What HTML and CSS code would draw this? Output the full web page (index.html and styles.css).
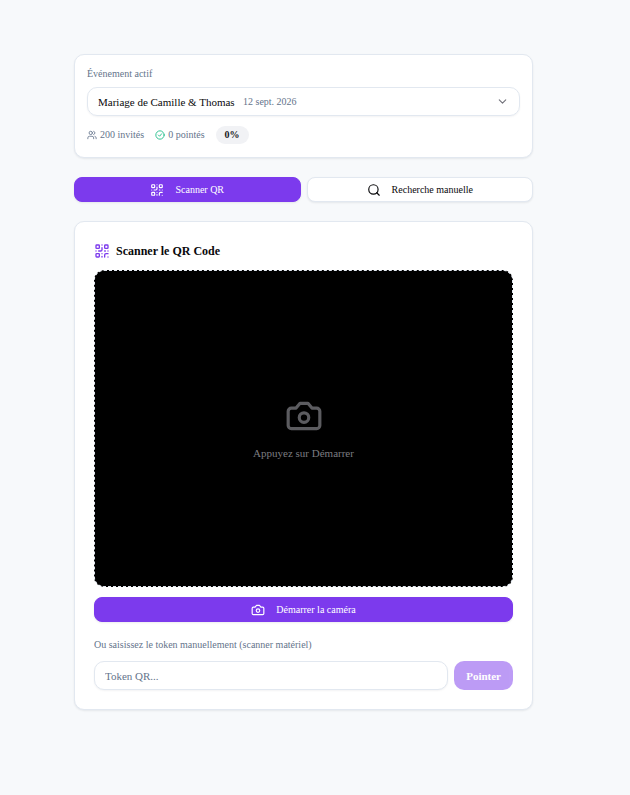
FILE: index.html
```html
<!DOCTYPE html>
<html lang="fr">
<head>
<meta charset="utf-8">
<meta name="viewport" content="width=device-width, initial-scale=1">
<title>Pointage des invités</title>
<link rel="stylesheet" href="styles.css">
</head>
<body>
<svg class="sprite" aria-hidden="true">
  <symbol id="qr" viewBox="0 0 24 24">
    <rect x="3" y="3" width="5" height="5" rx="1"/><rect x="16" y="3" width="5" height="5" rx="1"/><rect x="3" y="16" width="5" height="5" rx="1"/>
    <path d="M21 16h-3a2 2 0 0 0-2 2v3M21 21v.01M12 7v3a2 2 0 0 1-2 2H7M3 12h.01M12 3h.01M12 16v.01M16 12h1M21 12v.01M12 21v-1"/>
  </symbol>
  <symbol id="camera" viewBox="0 0 24 24">
    <path d="M14.5 4h-5L7 7H4a2 2 0 0 0-2 2v9a2 2 0 0 0 2 2h16a2 2 0 0 0 2-2V9a2 2 0 0 0-2-2h-3l-2.500-3z"/><circle cx="12" cy="13" r="3"/>
  </symbol>
</svg>
<main class="page">
  <section class="card event">
    <label class="caption" for="event">Événement actif</label>
    <div class="select">
      <select id="event"><option>Mariage de Camille &amp; Thomas</option></select>
      <span class="date">12 sept. 2026</span>
      <svg class="icon chevron" viewBox="0 0 24 24" aria-hidden="true"><path d="m6 9 6 6 6-6"/></svg>
    </div>
    <div class="stats">
      <span class="stat"><svg class="icon small" viewBox="0 0 24 24" aria-hidden="true"><path d="M16 21v-2a4 4 0 0 0-4-4H6a4 4 0 0 0-4 4v2M22 21v-2a4 4 0 0 0-3-3.870M16 3.130a4 4 0 0 1 0 7.750"/><circle cx="9" cy="7" r="4"/></svg>200 invités</span>
      <span class="stat"><svg class="icon small green" viewBox="0 0 24 24" aria-hidden="true"><circle cx="12" cy="12" r="10"/><path d="m8 12 3 3 5-6"/></svg>0 pointés</span>
      <span class="badge">0%</span>
    </div>
  </section>
  <div class="tabs">
    <button class="button primary" type="button"><svg class="icon" aria-hidden="true"><use href="#qr"/></svg>Scanner QR</button>
    <button class="button" type="button"><svg class="icon" viewBox="0 0 24 24" aria-hidden="true"><circle cx="11" cy="11" r="8"/><path d="m21 21-4.300-4.300"/></svg>Recherche manuelle</button>
  </div>
  <section class="card scanner">
    <h2 class="title"><svg class="icon violet" aria-hidden="true"><use href="#qr"/></svg>Scanner le QR Code</h2>
    <div class="viewer">
      <svg class="icon large" aria-hidden="true"><use href="#camera"/></svg>
      <p class="hint">Appuyez sur Démarrer</p>
    </div>
    <button class="button primary" type="button"><svg class="icon" aria-hidden="true"><use href="#camera"/></svg>Démarrer la caméra</button>
    <form class="manual">
      <label class="caption" for="token">Ou saisissez le token manuellement (scanner matériel)</label>
      <div class="row">
        <input class="token" id="token" type="text" placeholder="Token QR...">
        <button class="submit" type="submit" disabled>Pointer</button>
      </div>
    </form>
  </section>
</main>
</body>
</html>
```
FILE: styles.css
```css
* { box-sizing: border-box; }
body {
  margin: 0;
  min-height: 100vh;
  background: #f7f9fb;
  color: #09090b;
  font-family: "Liberation Serif", "Times New Roman", serif;
  font-size: 11px;
  line-height: 16px;
}
button, input, select { font: inherit; color: inherit; }
h2, p { margin: 0; }
.sprite { display: none; }
.page {
  display: flex;
  flex-direction: column;
  gap: 19px;
  padding: 54px 97px 84px 74px;
}
.card {
  background: #fff;
  border: 1px solid #e2e8f0;
  border-radius: 10px;
  box-shadow: 0 1px 2px rgb(15 23 42 / 8%);
}
.event { padding: 11px 12px 13px; }
.icon {
  width: 14px;
  height: 14px;
  flex: none;
  fill: none;
  stroke: currentColor;
  stroke-width: 2;
  stroke-linecap: round;
  stroke-linejoin: round;
}
.small { width: 10px; height: 10px; }
.green { color: #10b981; }
.violet { color: #7c3aed; width: 16px; height: 16px; }
.large { width: 38px; height: 38px; }
.caption {
  display: block;
  color: #64748b;
  font-size: 10px;
  line-height: 16px;
}
.select {
  display: flex;
  align-items: center;
  gap: 8px;
  height: 29px;
  margin-top: 5px;
  padding: 0 10px;
  border: 1px solid #e2e8f0;
  border-radius: 10px;
  box-shadow: 0 1px 2px rgb(15 23 42 / 5%);
}
.select select {
  appearance: none;
  border: 0;
  padding: 0;
  background: transparent;
  font-size: 11px;
}
.date { color: #64748b; font-size: 10px; }
.chevron { width: 13px; height: 13px; margin-left: auto; color: #71717a; }
.stats {
  display: flex;
  align-items: center;
  gap: 11px;
  margin-top: 10px;
  color: #64748b;
  font-size: 10px;
}
.stat { display: flex; align-items: center; gap: 3px; }
.badge {
  padding: 1px 9px;
  border-radius: 9px;
  background: #f1f2f5;
  color: #18181b;
  font-weight: 600;
}
.tabs { display: grid; grid-template-columns: 1fr 1fr; gap: 6px; }
.button {
  display: flex;
  align-items: center;
  justify-content: center;
  gap: 11px;
  width: 100%;
  height: 25px;
  padding: 0 10px;
  border: 1px solid #e2e8f0;
  border-radius: 8px;
  background: #fff;
  box-shadow: 0 1px 2px rgb(15 23 42 / 8%);
  font-size: 10px;
}
.primary { border-color: #7c3aed; background: #7c3aed; color: #fff; }
.scanner { padding: 20px 19px 19px; }
.title {
  display: flex;
  align-items: center;
  gap: 6px;
  margin-bottom: 10px;
  font-size: 12px;
  line-height: 18px;
  font-weight: 600;
}
.viewer {
  display: flex;
  flex-direction: column;
  align-items: center;
  justify-content: center;
  gap: 10px;
  aspect-ratio: 419 / 317;
  width: 100%;
  margin-bottom: 10px;
  border: 1px dashed #e2e8f0;
  border-radius: 10px;
  background: #000;
  color: #5c5c60;
}
.hint { color: #7c7c80; font-size: 11px; }
.manual { margin-top: 15px; }
.row { display: flex; gap: 6px; margin-top: 8px; }
.token {
  flex: 1;
  min-width: 0;
  height: 29px;
  padding: 0 10px;
  border: 1px solid #e2e8f0;
  border-radius: 10px;
  background: #fff;
  box-shadow: 0 1px 2px rgb(15 23 42 / 5%);
}
.token::placeholder { color: #64748b; opacity: 1; }
.submit {
  height: 29px;
  padding: 0 12px;
  border: 0;
  border-radius: 10px;
  background: #7c3aed;
  color: #fff;
  font-weight: 600;
  opacity: .5;
}
```
